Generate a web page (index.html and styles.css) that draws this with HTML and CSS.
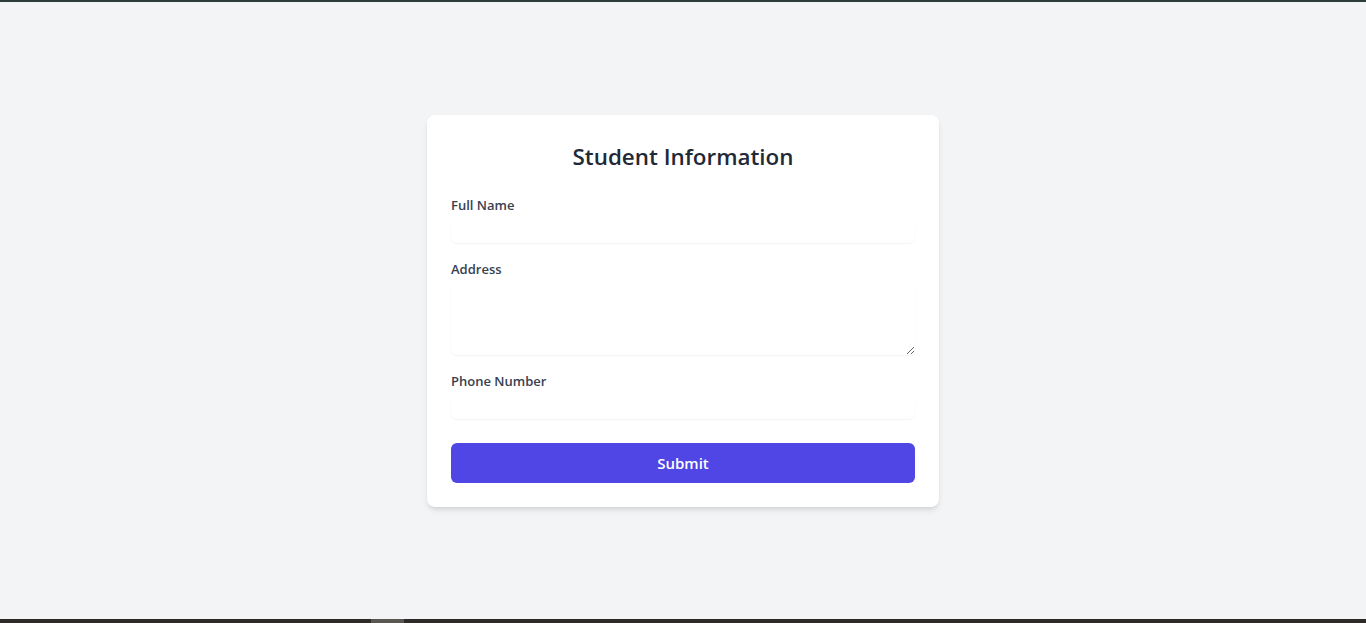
FILE: index.html
```html
<!DOCTYPE html>
<html lang="en">
<head>
<meta charset="utf-8">
<title>Student Information</title>
<link rel="stylesheet" href="styles.css">
</head>
<body>
<div class="topline"></div>
<main class="page">
  <form class="card">
    <h1 class="title">Student Information</h1>
    <div class="field">
      <label class="label" for="name">Full Name</label>
      <input class="input" id="name" type="text">
    </div>
    <div class="field">
      <label class="label" for="address">Address</label>
      <textarea class="input textarea" id="address" rows="3"></textarea>
    </div>
    <div class="field field-last">
      <label class="label" for="phone">Phone Number</label>
      <input class="input" id="phone" type="tel">
    </div>
    <button class="submit" type="button">Submit</button>
  </form>
</main>
<div class="taskbar"><span class="taskbar-item"></span></div>
</body>
</html>
```
FILE: styles.css
```css
* { box-sizing: border-box; }
html, body { margin: 0; padding: 0; }
body {
  background: #f3f4f6;
  font-family: "Open Sans", "Noto Sans", sans-serif;
  line-height: 1.5;
  color: #1f2937;
}
.topline {
  position: fixed; top: 0; left: 0; right: 0;
  height: 2px; background: #2c3d39;
}
.taskbar {
  position: fixed; bottom: 0; left: 0; right: 0;
  height: 4px; background: #2d2a27;
}
.taskbar-item {
  position: absolute; left: 371px; top: 0;
  width: 33px; height: 4px; background: #5a5753;
}
.page {
  min-height: 622px;
  display: flex;
  align-items: center;
  justify-content: center;
}
.card {
  width: 512px;
  background: #fff;
  border-radius: 8px;
  padding: 24px;
  box-shadow: 0 4px 6px -1px rgba(0,0,0,.1), 0 2px 4px -2px rgba(0,0,0,.1);
}
.title {
  margin: 0 0 24px;
  font-size: 22.4px;
  line-height: 32px;
  padding-top: 2px;
  height: 32px;
  font-weight: 600;
  text-align: center;
  color: #1f2937;
}
.field { margin-bottom: 16px; }
.field-last { margin-bottom: 24px; }
.label {
  display: block;
  font-size: 13px;
  line-height: 20px;
  font-weight: 600;
  color: #374151;
}
.input {
  display: block;
  width: 100%;
  margin-top: 4px;
  border: 0;
  padding: 0;
  height: 24px;
  font: inherit;
  font-size: 16px;
  line-height: 24px;
  border-radius: 6px;
  background: #fff;
  box-shadow: 0 1px 2px 0 rgba(0,0,0,.05);
  outline: none;
}
.textarea { height: 72px; resize: vertical; }
.submit {
  display: block;
  width: 100%;
  height: 40px;
  border: 0;
  border-radius: 6px;
  background: #4f46e5;
  color: #fff;
  font-family: inherit;
  font-size: 15px;
  font-weight: 600;
  line-height: 24px;
  padding: 8px 16px;
  cursor: pointer;
}
```
